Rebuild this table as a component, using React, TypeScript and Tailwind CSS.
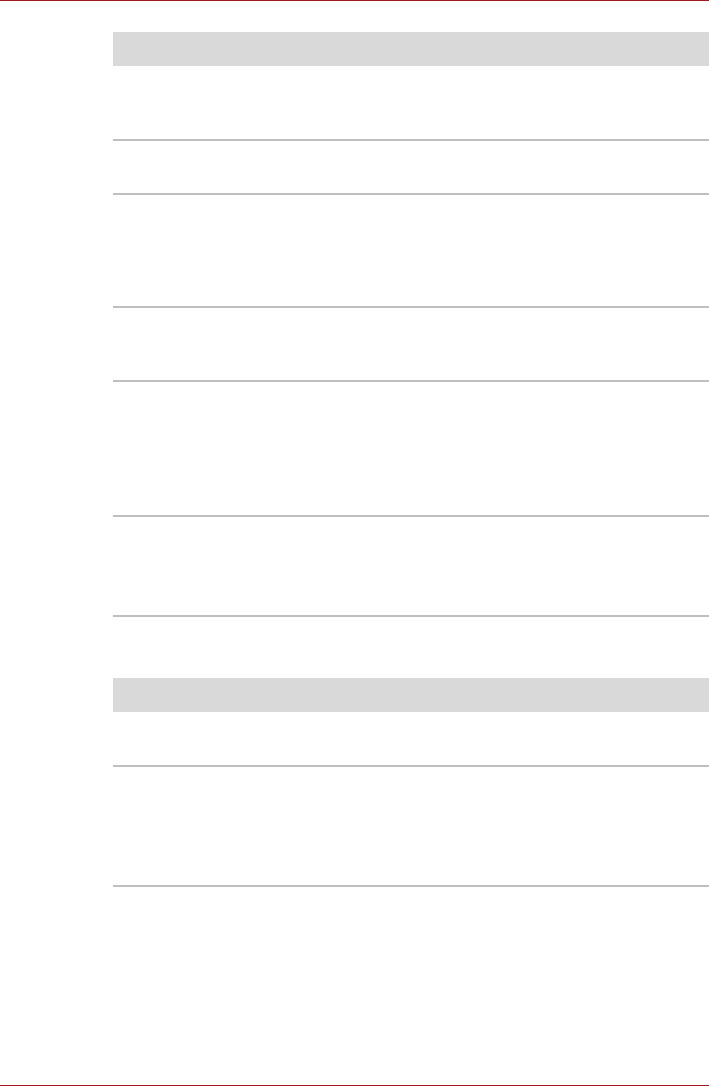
const tableOneRows = ["h-[75px]", "h-[54px]", "h-[113px]", "h-[74px]", "h-[135px]", "h-[100px]"];
const tableTwoRows = ["h-[55px]", "h-[120px]"];

function Table({ rows }: { rows: string[] }) {
  return (
    <div className="flex flex-col">
      {/* header band */}
      <div className="h-[34px] bg-[#d9d9d9]" />
      {rows.map((h, i) => (
        <div key={i} className={`${h} border-b-2 border-[#bfbfbf]`} />
      ))}
    </div>
  );
}

export default function App() {
  return (
    <div className="w-[709px] h-[1087px] bg-white flex flex-col font-['Liberation_Sans',sans-serif]">
      <div className="h-px bg-[#a3191e]" />

      <div className="pl-[113px] pt-[31px] flex flex-col gap-[61px]">
        <Table rows={tableOneRows} />
        <Table rows={tableTwoRows} />
      </div>

      <div className="mt-auto mb-px h-px bg-[#a3191e]" />
    </div>
  );
}
